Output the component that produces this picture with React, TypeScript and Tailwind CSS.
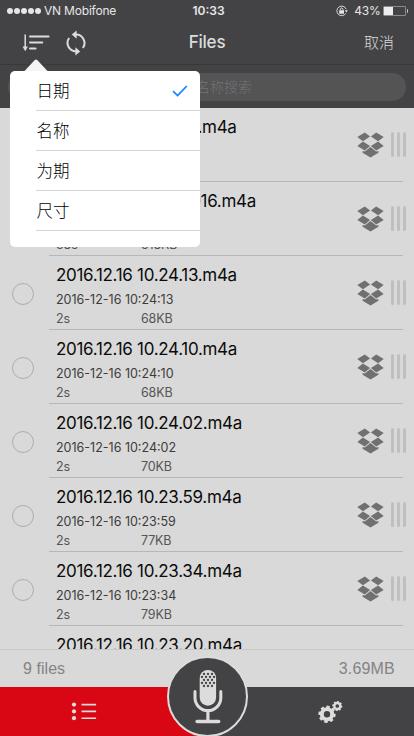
const files = [
  { name: '2016.12.16 10.25.19.m4a', date: '2016-12-16 10:25:19', length: '5s', size: '98KB' },
  { name: 'Recording 16.12.2016.m4a', date: '2016-12-16 10:24:40', length: '38s', size: '318KB' },
  { name: '2016.12.16 10.24.13.m4a', date: '2016-12-16 10:24:13', length: '2s', size: '68KB' },
  { name: '2016.12.16 10.24.10.m4a', date: '2016-12-16 10:24:10', length: '2s', size: '68KB' },
  { name: '2016.12.16 10.24.02.m4a', date: '2016-12-16 10:24:02', length: '2s', size: '70KB' },
  { name: '2016.12.16 10.23.59.m4a', date: '2016-12-16 10:23:59', length: '2s', size: '77KB' },
  { name: '2016.12.16 10.23.34.m4a', date: '2016-12-16 10:23:34', length: '2s', size: '79KB' },
  { name: '2016.12.16 10.23.20.m4a', date: '2016-12-16 10:23:20', length: '2s', size: '74KB' },
];

const sortOptions = ['日期', '名称', '为期', '尺寸'];

function SortIcon() {
  return (
    <svg width="28" height="18" viewBox="0 0 28 18" fill="none" stroke="#dcdcdc" strokeLinecap="round">
      <path d="M3.2 1v13" strokeWidth="1.5" />
      <path d="M0.5 12.5h5.4L3.2 17.2z" fill="#dcdcdc" stroke="none" />
      <path d="M8 2.4h18.6M8 8.5h12.3M8 14.6h5.6" strokeWidth="2" />
    </svg>
  );
}

function SyncIcon() {
  return (
    <svg width="20" height="26" viewBox="0 0 20 26" fill="none" stroke="#dcdcdc" strokeWidth="2">
      <path d="M10 4.6A8.5 8.5 0 0 1 16.9 18" />
      <path d="M10 21.4A8.5 8.5 0 0 1 3.1 8" />
      <path d="M10.6 0.4v8.4L5.8 4.6z" fill="#dcdcdc" stroke="none" />
      <path d="M9.4 25.6v-8.4l4.8 4.2z" fill="#dcdcdc" stroke="none" />
    </svg>
  );
}

function RotationLockIcon() {
  return (
    <svg width="12" height="12" viewBox="0 0 12 12" fill="none" stroke="#e6e6e6">
      <path d="M10.2 4.2A4.8 4.8 0 1 0 9.8 8.4" strokeWidth="0.9" />
      <path d="M8.8 5.2h3L10.3 7.4z" fill="#e6e6e6" stroke="none" />
      <rect x="3.2" y="5.2" width="4.8" height="3.6" rx="0.4" fill="#e6e6e6" stroke="none" />
      <path d="M4.3 5.4V4.3a1.3 1.3 0 0 1 2.6 0v1.1" strokeWidth="0.9" />
    </svg>
  );
}

function DropboxIcon() {
  return (
    <svg width="27" height="26" viewBox="0 0 27 26" fill="#6f7071">
      <path d="M0.3 5 7.8 0.4 13.1 4.5 5.9 9.2z" />
      <path d="M26.7 5 19.2 0.4 13.9 4.5 21.1 9.2z" />
      <path d="M0.3 13.9 5.9 9.6 13.1 14 7.8 18.6z" />
      <path d="M26.7 13.9 21.1 9.6 13.9 14 19.2 18.6z" />
      <path d="M5.6 19.1 7.8 19.4 13.5 15 19.2 19.4 21.4 19.1V20.8L13.5 25.6 5.6 20.8z" />
    </svg>
  );
}

function Gear({ cx, cy, r }: { cx: number; cy: number; r: number }) {
  return (
    <g transform={`translate(${cx} ${cy})`}>
      <circle r={r * 0.6} fill="none" stroke="#dcdcdc" strokeWidth={r * 0.46} />
      {[0, 45, 90, 135, 180, 225, 270, 315].map((a) => (
        <rect
          key={a}
          x={-r * 0.2}
          y={-r}
          width={r * 0.4}
          height={r * 0.35}
          rx={r * 0.05}
          fill="#dcdcdc"
          transform={`rotate(${a + 8})`}
        />
      ))}
    </g>
  );
}

function MicIcon() {
  const dots = [
    [27, 0], [31, 0], [35, 0],
    [25, 3], [29, 3], [33, 3], [37, 3],
    [27, 6], [31, 6], [35, 6],
    [25, 9], [29, 9], [33, 9], [37, 9],
    [27, 12], [31, 12], [35, 12],
  ];
  return (
    <svg width="30" height="54" viewBox="16 -2 30 54" fill="none" stroke="#dcdcdc">
      <path d="M22.7 6a8.2 8 0 0 1 16.4 0v19.5a8.2 8.2 0 0 1-16.4 0z" fill="#dcdcdc" stroke="none" />
      {dots.map(([x, y]) => (
        <circle key={`${x}-${y}`} cx={x} cy={y + 2} r="1.15" fill="#434345" stroke="none" />
      ))}
      <path d="M18 19.5v6.2a12.9 12.9 0 0 0 25.8 0v-6.2" strokeWidth="3" strokeLinecap="round" />
      <path d="M30.9 38v10" strokeWidth="3.2" />
      <path d="M20.1 49.5h21.6" strokeWidth="3.4" strokeLinecap="round" />
    </svg>
  );
}

function FileRow({ file }: { file: (typeof files)[number] }) {
  return (
    <li className="flex h-[74px] shrink-0">
      <div className="flex w-[49px] shrink-0 items-center pt-[2px] pl-3">
        <span className="size-[22px] rounded-full border border-[#adadad]" />
      </div>
      <div className="mr-[11px] flex flex-1 justify-between border-b border-[#b7b7b8] pl-[7px]">
        <div className="whitespace-nowrap">
          <p className="mt-[8px] text-[17px] leading-[22px] tracking-[-0.3px] text-[#0b0b0b]">{file.name}</p>
          <p className="mt-[6px] text-[12.5px] leading-[16px] text-[#3c3c3c]">{file.date}</p>
          <p className="mt-[3px] flex text-[12.5px] leading-[16px] tracking-[-0.15px] text-[#555]">
            <span className="w-[85px]">{file.length}</span>
            <span>{file.size}</span>
          </p>
        </div>
        <div className="-mr-[3px] flex items-center gap-[7px]">
          <DropboxIcon />
          <div className="flex h-[25px] gap-[3px]">
            <span className="w-[3px] rounded-full bg-[#bfbfbf]" />
            <span className="w-[3px] rounded-full bg-[#bfbfbf]" />
            <span className="w-[3px] rounded-full bg-[#bfbfbf]" />
          </div>
        </div>
      </div>
    </li>
  );
}

function SortMenu() {
  return (
    <div className="absolute top-[59px] left-[10px] w-[190px]">
      <svg className="ml-[14px] block" width="24" height="12" viewBox="0 0 24 12">
        <path d="M0.5 12 10.8 1Q12 0 13.2 1L23.5 12z" fill="#f3f3f3" />
      </svg>
      <ul className="h-[176px] rounded-[5px] bg-white pl-[26px]">
        {sortOptions.map((option, i) => (
          <li key={option} className="flex h-10 items-center justify-between border-b border-[#d6d6d7] pr-3">
            <span className="pt-[2px] pl-[0.5px] text-[16.5px] font-light text-black">{option}</span>
            {i === 0 && (
              <svg width="16" height="12" viewBox="0 0 16 12" fill="none" stroke="#1482fa" strokeWidth="1.7">
                <path d="M1 6.2 5.6 10.6 14.8 1" />
              </svg>
            )}
          </li>
        ))}
      </ul>
    </div>
  );
}

export default function App() {
  return (
    <div className="relative flex h-[736px] w-[414px] flex-col overflow-hidden bg-[#d9d9d9] font-['Inter','Noto_Sans_CJK_SC',sans-serif]">
      <header className="h-[65px] shrink-0 border-b border-[#39393b] bg-[#434345] text-[#e6e6e6]">
        <div className="grid h-[22px] grid-cols-3 items-center pr-[6px] pl-[7px] text-[12px]">
          <div className="flex items-center gap-[1px] whitespace-nowrap">
            {[0, 1, 2, 3, 4].map((i) => (
              <span key={i} className="size-[6px] rounded-full bg-[#e6e6e6]" />
            ))}
            <span className="ml-[2px] tracking-[-0.2px]">VN Mobifone</span>
          </div>
          <span className="pl-[2px] text-center font-semibold">10:33</span>
          <div className="flex items-center justify-end">
            <RotationLockIcon />
            <span className="mr-[2px] ml-[6px] tracking-[-0.2px]">43%</span>
            <span className="flex h-[10px] w-[23px] rounded-[1px] border border-[#8c8c8d]">
              <span className="w-[9px] bg-[#ededed]" />
            </span>
            <span className="ml-px h-[4px] w-[1.5px] rounded-r bg-[#c6c6c6]" />
          </div>
        </div>
        <div className="grid h-[42px] grid-cols-3 items-center pr-[20px] pl-[22px]">
          <div className="flex items-center gap-[16px] pb-px">
            <SortIcon />
            <SyncIcon />
          </div>
          <h1 className="pr-[2px] text-center text-[17px] font-medium tracking-[-0.2px] text-[#dcdcdc]">Files</h1>
          <span className="text-right text-[15px] font-light text-[#dcdcdc]">取消</span>
        </div>
      </header>

      <div className="flex h-[43px] shrink-0 items-center bg-[#434345] px-2">
        <div className="flex h-[28px] flex-1 items-center justify-center rounded-full bg-[#545454] text-[14px] font-light text-[#737377]">
          <span className="pb-px pl-[20px]">按名称搜索</span>
        </div>
      </div>

      <ul className="flex flex-1 flex-col overflow-hidden">
        {files.map((file) => (
          <FileRow key={file.date} file={file} />
        ))}
      </ul>

      <div className="flex h-[38px] shrink-0 items-center justify-between border-t border-[#c8c8c8] pr-[19px] pl-[23px] font-['Liberation_Sans',sans-serif] text-[16px] text-[#848484]">
        <span className="tracking-[0.05px]">9 files</span>
        <span className="tracking-[0.2px]">3.69MB</span>
      </div>

      <nav className="flex h-[49px] shrink-0">
        <button className="flex w-1/2 items-center bg-[#d90613] pl-[71px]">
          <svg width="26" height="19" viewBox="0 0 26 19" fill="#dcdcdc">
            <circle cx="3" cy="2.6" r="2.1" />
            <circle cx="3" cy="9.4" r="2.1" />
            <circle cx="3" cy="16.2" r="2.1" />
            <path d="M10.5 1.8h14.6v1.7H10.5zM10.5 8.6h14.6v1.7H10.5zM10.5 15.4h14.6v1.7H10.5z" />
          </svg>
        </button>
        <button className="flex w-1/2 items-center bg-[#434345] pl-[111px]">
          <svg width="26" height="24" viewBox="0 0 26 24">
            <Gear cx={9} cy={14.3} r={8.6} />
            <Gear cx={19.3} cy={6} r={5} />
          </svg>
        </button>
      </nav>

      <button className="absolute top-[656px] left-[167px] flex size-[81px] items-center justify-center rounded-full border-2 border-[#dcdcdc] bg-[#434345]">
        <MicIcon />
      </button>

      <SortMenu />
    </div>
  );
}
